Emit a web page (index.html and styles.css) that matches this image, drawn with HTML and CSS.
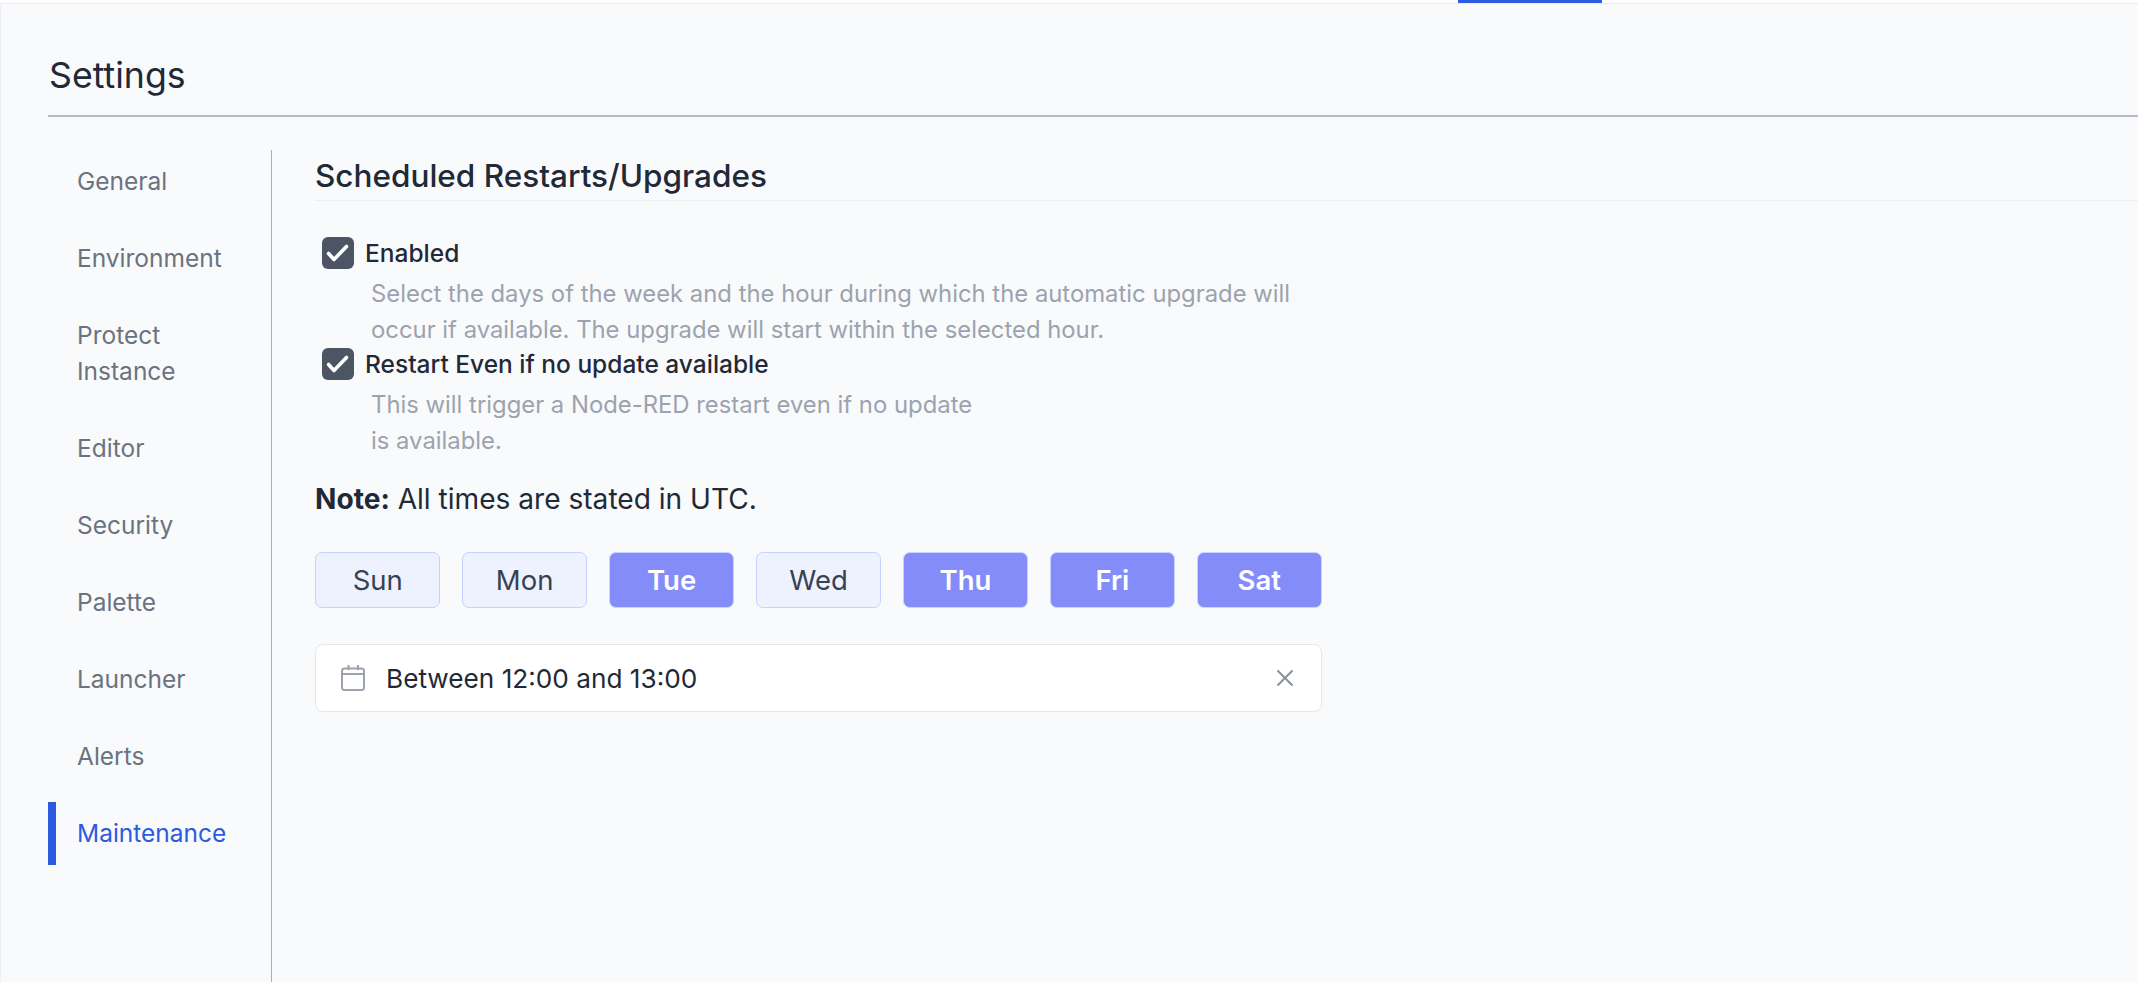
FILE: index.html
```html
<!DOCTYPE html>
<html lang="en">
<head>
<meta charset="utf-8">
<title>Settings</title>
<link rel="stylesheet" href="styles.css">
</head>
<body>
<div class="topbar"><div class="tab-indicator"></div></div>
<main class="page">
  <header class="page-header"><h1>Settings</h1></header>
  <div class="layout">
    <nav class="sidenav">
      <a class="nav-item">General</a>
      <a class="nav-item">Environment</a>
      <a class="nav-item nav-double">Protect Instance</a>
      <a class="nav-item">Editor</a>
      <a class="nav-item">Security</a>
      <a class="nav-item">Palette</a>
      <a class="nav-item">Launcher</a>
      <a class="nav-item">Alerts</a>
      <a class="nav-item active">Maintenance</a>
    </nav>
    <section class="content">
      <h2>Scheduled Restarts/Upgrades</h2>
      <div class="form">
        <div class="check">
          <span class="box"><svg viewBox="0 0 32 32" width="32" height="32"><path d="M6.5 16.5L12 22.5 24.5 9.5" fill="none" stroke="#fff" stroke-width="3.6" stroke-linecap="round" stroke-linejoin="round"/></svg></span>
          <span class="check-label">Enabled</span>
        </div>
        <p class="desc desc-wide">Select the days of the week and the hour during which the automatic upgrade will occur if available. The upgrade will start within the selected hour.</p>
        <div class="check">
          <span class="box"><svg viewBox="0 0 32 32" width="32" height="32"><path d="M6.5 16.5L12 22.5 24.5 9.5" fill="none" stroke="#fff" stroke-width="3.6" stroke-linecap="round" stroke-linejoin="round"/></svg></span>
          <span class="check-label">Restart Even if no update available</span>
        </div>
        <p class="desc desc-narrow">This will trigger a Node-RED restart even if no update is available.</p>
        <p class="note"><strong>Note:</strong> All times are stated in UTC.</p>
        <div class="days">
          <button class="day">Sun</button>
          <button class="day">Mon</button>
          <button class="day on">Tue</button>
          <button class="day">Wed</button>
          <button class="day on">Thu</button>
          <button class="day on">Fri</button>
          <button class="day on">Sat</button>
        </div>
        <div class="picker">
          <svg class="cal" viewBox="0 0 24 26" width="24" height="26"><rect x="1" y="3.5" width="22" height="21.5" rx="2.5" fill="none" stroke="#9ca3af" stroke-width="2"/><path d="M1 9h22M7.5 0v5M17 0v5" fill="none" stroke="#9ca3af" stroke-width="2"/></svg>
          <span class="picker-text">Between 12:00 and 13:00</span>
          <svg class="clear" viewBox="0 0 18 18" width="18" height="18"><path d="M1.5 1.5l15 15M16.5 1.5l-15 15" fill="none" stroke="#8b9099" stroke-width="2"/></svg>
        </div>
      </div>
    </section>
  </div>
</main>
</body>
</html>
```

FILE: styles.css
```css
* { box-sizing: border-box; }
html, body { height: 100%; }
body {
  margin: 0;
  overflow: hidden;
  background: #f9fafc;
  color: #1f2937;
  font-family: Inter, "Liberation Sans", sans-serif;
  display: flex;
  flex-direction: column;
}
.topbar {
  height: 4px;
  flex: none;
  background: #fff;
  border-bottom: 1px solid #e9ebef;
}
.tab-indicator {
  width: 144px;
  height: 3px;
  margin-left: 1458px;
  background: #2d5be0;
}
.page {
  flex: 1;
  min-height: 0;
  padding-left: 48px;
  border-left: 1px solid #eef0f3;
  display: flex;
  flex-direction: column;
}
.page-header {
  height: 113px;
  flex: none;
  margin-left: -1px;
  border-bottom: 2px solid #b4b9c5;
  padding-top: 51px;
}
h1 {
  margin: 0 0 0 1px;
  font-size: 35.7px;
  font-weight: 400;
  line-height: 40px;
}
.layout {
  flex: 1;
  min-height: 0;
  display: flex;
  margin-top: 33px;
  margin-left: -1px;
}
.sidenav {
  width: 224px;
  flex: none;
  border-right: 1px solid #a9aeb9;
  display: flex;
  flex-direction: column;
  gap: 14px;
}
.nav-item {
  min-height: 63px;
  padding: 13px 28px 14px 21px;
  border-left: 8px solid transparent;
  font-size: 24.5px;
  line-height: 36px;
  color: #6b7280;
}
.nav-item.active {
  border-left-color: #2d5be0;
  color: #2d5be0;
}
.content {
  flex: 1;
  min-width: 0;
  padding-left: 43px;
}
h2 {
  margin: 0;
  height: 51px;
  padding-top: 1px;
  font-size: 31.5px;
  font-weight: 500;
  line-height: 50px;
  border-bottom: 1px solid #eceef2;
}
.form {
  width: 1007px;
  padding-top: 36px;
}
.check {
  display: flex;
  align-items: center;
  gap: 11px;
  height: 32px;
  margin-left: 7px;
}
.box {
  width: 32px;
  height: 32px;
  border-radius: 6px;
  background: #4b5563;
  display: block;
}
.box svg { display: block; }
.check-label {
  font-size: 24.5px;
  font-weight: 500;
  color: #1f2937;
}
.desc {
  margin: 7px 0 0 56px;
  font-size: 23.85px;
  line-height: 36px;
  color: #9ca3af;
}
.desc-wide { width: 950px; margin-bottom: 0; }
.desc-narrow { width: 610px; }
.note {
  margin: 20px 0 0;
  font-size: 28.1px;
  line-height: 40px;
}
.note strong { font-weight: 700; }
.days {
  display: grid;
  grid-template-columns: repeat(7, 1fr);
  gap: 21.5px;
  margin-top: 33px;
}
.day {
  height: 56px;
  padding: 0;
  font: 400 27.5px Inter, "Liberation Sans", sans-serif;
  color: #374151;
  background: #eef2ff;
  border: 1px solid #c7d2fe;
  border-radius: 7px;
}
.day.on {
  color: #fff;
  font-weight: 600;
  background: #838cf8;
}
.picker {
  height: 68px;
  margin-top: 36px;
  padding: 0 27px 0 25px;
  background: #fff;
  border: 1px solid #e5e7eb;
  border-radius: 8px;
  display: flex;
  align-items: center;
  gap: 21px;
}
.picker-text {
  flex: 1;
  font-size: 26.2px;
}
.cal, .clear { flex: none; }
```
